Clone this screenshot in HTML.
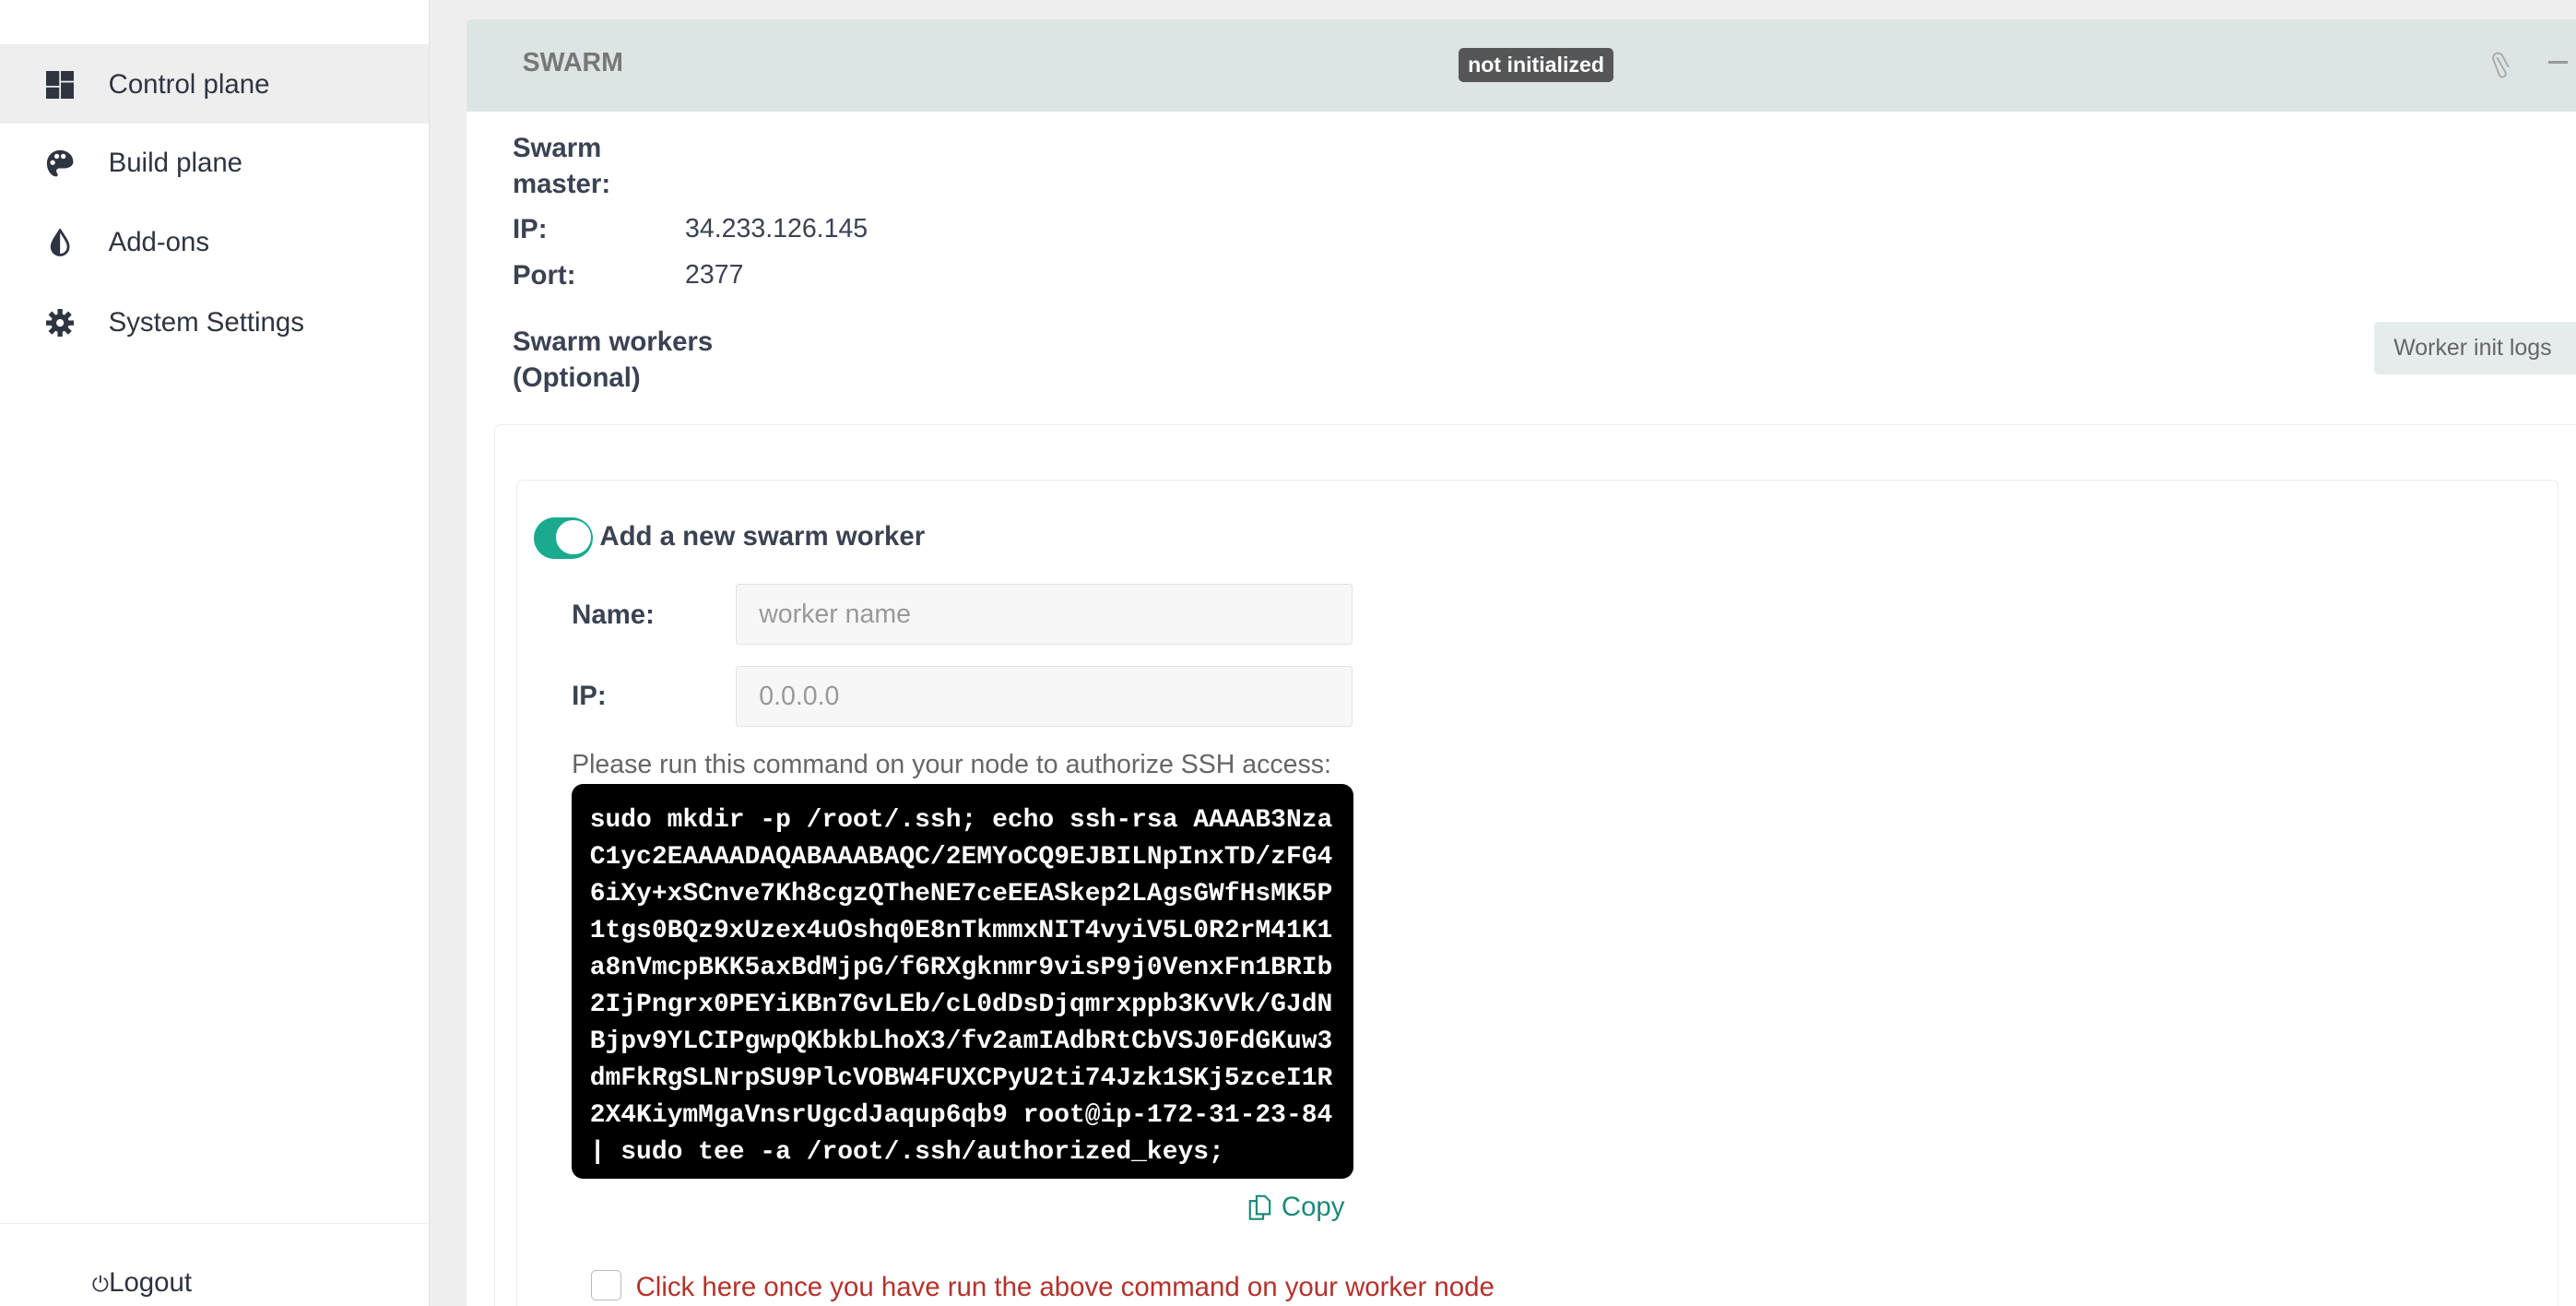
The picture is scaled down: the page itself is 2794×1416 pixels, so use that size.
<!DOCTYPE html>
<html><head><meta charset="utf-8"><style>
html,body{margin:0;padding:0;overflow:hidden}
body{width:2794px;height:1416px;background:#eeeeee;font-family:"Liberation Sans",sans-serif}
#w{zoom:1.78189;width:1568px;height:795px;position:relative;overflow:hidden}
.a{position:absolute;white-space:nowrap}
#side{position:absolute;left:0;top:0;width:261px;height:795px;background:#fff;border-right:1px solid #e2e2e2}
.it{position:absolute;left:0;width:261px;height:48px;font-size:16.5px;color:#2e3440}
.it span{position:absolute;left:66px;top:15px}
.it svg{position:absolute;left:28px;top:16px}
.lb{font-weight:bold;font-size:16.5px;color:#3b4252}
</style></head><body><div id="w">
<div id="side">
 <div class="it" style="top:27px;background:#eeeeee"><svg width="17" height="17" viewBox="0 0 17 17" fill="#2e3440"><rect x="0" y="0" width="8" height="9"/><rect x="0" y="10" width="8" height="7"/><rect x="9" y="0" width="8" height="6"/><rect x="9" y="7" width="8" height="10"/></svg><span>Control plane</span></div>
 <div class="it" style="top:75px"><svg width="17" height="17" viewBox="0 0 17 17"><path d="M8.5 0.5C4 0.5 0.5 4 0.5 8.5 0.5 13 3.5 16.5 6 16.5 7.5 16.5 7.3 15 6.5 14 5.8 13 6.5 11.5 8 11.5L11 11.5C14 11.5 16.5 10 16.5 7.5 16.5 3.5 13 0.5 8.5 0.5Z" fill="#2e3440"/><circle cx="4" cy="8" r="1.5" fill="#fff"/><circle cx="6.5" cy="4.2" r="1.5" fill="#fff"/><circle cx="10.5" cy="4.2" r="1.5" fill="#fff"/></svg><span>Build plane</span></div>
 <div class="it" style="top:123px"><svg width="17" height="17" viewBox="0 0 17 17"><path d="M8.5 1C6 5 3.5 8 3.5 11a5 5 0 0 0 10 0C13.5 8 11 5 8.5 1Z" fill="none" stroke="#2e3440" stroke-width="1.6"/><path d="M8.5 1C6 5 3.5 8 3.5 11a5 5 0 0 0 5 5Z" fill="#2e3440"/></svg><span>Add-ons</span></div>
 <div class="it" style="top:172px"><svg width="17" height="17" viewBox="0 0 17 17"><g fill="#2e3440"><circle cx="8.5" cy="8.5" r="5.5"/><rect x="7" y="0" width="3" height="17"/><rect x="0" y="7" width="17" height="3"/><rect x="7" y="0" width="3" height="17" transform="rotate(45 8.5 8.5)"/><rect x="7" y="0" width="3" height="17" transform="rotate(-45 8.5 8.5)"/></g><circle cx="8.5" cy="8.5" r="2.3" fill="#fff"/></svg><span>System Settings</span></div>
 <div class="a" style="left:0;top:744px;width:261px;border-top:1px solid #eee"></div>
 <div class="a" style="left:56px;top:771px;font-size:16.5px;color:#2e3440"><span style="font-size:13px">⏻</span>Logout</div>
</div>
<div class="a" style="left:284px;top:12px;width:1290px;height:800px;background:#fff;border-radius:3px"></div>
<div class="a" style="left:284px;top:12px;width:1290px;height:56px;background:#dce5e3;border-radius:3px 3px 0 0"></div>
<div class="a" style="left:318px;top:29px;font-weight:bold;font-size:16px;color:#777">SWARM</div>
<div class="a" style="left:888px;top:29px;width:94px;height:21px;background:#555657;border-radius:3px;color:#fff;font-weight:bold;font-size:13px;text-align:center;line-height:21px">not initialized</div>
<svg class="a" style="left:1517px;top:31px" width="12" height="17" viewBox="0 0 12 17"><path d="M3 4L8 13a2 2 0 0 1-3.5 2L1 6a3 3 0 0 1 5.2-3L10 10" fill="none" stroke="#aaa" stroke-width="1.1"/></svg>
<div class="a" style="left:1551px;top:37px;width:12px;height:2px;background:#999"></div>
<div class="a lb" style="left:312px;top:79px;line-height:22px">Swarm<br>master:</div>
<div class="a lb" style="left:312px;top:130px">IP:</div>
<div class="a" style="left:417px;top:130px;font-size:16px;color:#3b4252">34.233.126.145</div>
<div class="a lb" style="left:312px;top:158px">Port:</div>
<div class="a" style="left:417px;top:158px;font-size:16px;color:#3b4252">2377</div>
<div class="a lb" style="left:312px;top:197px;line-height:22px">Swarm workers<br>(Optional)</div>
<div class="a" style="left:1445px;top:196px;width:130px;height:32px;background:#e6ecee;border-radius:3px;font-size:14px;color:#666;line-height:32px;padding-left:12px">Worker init logs</div>
<div class="a" style="left:301px;top:258px;width:1280px;height:560px;border:1px solid #ececec;border-radius:4px"></div>
<div class="a" style="left:314px;top:292px;width:1242px;height:520px;border:1px solid #ececec;border-radius:4px"></div>
<div class="a" style="left:325px;top:315px;width:36px;height:25px;background:#1aab8f;border-radius:13px"></div>
<div class="a" style="left:338px;top:316px;width:21px;height:21px;background:#fff;border-radius:50%;border:1px solid #1aab8f"></div>
<div class="a lb" style="left:365px;top:317px">Add a new swarm worker</div>
<div class="a lb" style="left:348px;top:365px">Name:</div>
<div class="a" style="left:448px;top:355px;width:374px;height:36px;background:#f7f7f7;border:1px solid #e2e2e2;border-radius:2px"></div>
<div class="a" style="left:462px;top:365px;font-size:16px;color:#999">worker name</div>
<div class="a lb" style="left:348px;top:414px">IP:</div>
<div class="a" style="left:448px;top:405px;width:374px;height:36px;background:#f7f7f7;border:1px solid #e2e2e2;border-radius:2px"></div>
<div class="a" style="left:462px;top:415px;font-size:16px;color:#999">0.0.0.0</div>
<div class="a" style="left:348px;top:456px;font-size:16px;color:#666">Please run this command on your node to authorize SSH access:</div>
<div class="a" style="left:348px;top:477px;width:476px;height:240px;background:#000;border-radius:7px"></div>
<pre class="a" style="left:359px;top:488px;margin:0;white-space:pre;font-family:'Liberation Mono',monospace;font-weight:bold;font-size:15.7px;line-height:22.45px;color:#fff">sudo mkdir -p /root/.ssh; echo ssh-rsa AAAAB3Nza
C1yc2EAAAADAQABAAABAQC/2EMYoCQ9EJBILNpInxTD/zFG4
6iXy+xSCnve7Kh8cgzQTheNE7ceEEASkep2LAgsGWfHsMK5P
1tgs0BQz9xUzex4uOshq0E8nTkmmxNIT4vyiV5L0R2rM41K1
a8nVmcpBKK5axBdMjpG/f6RXgknmr9visP9j0VenxFn1BRIb
2IjPngrx0PEYiKBn7GvLEb/cL0dDsDjqmrxppb3KvVk/GJdN
Bjpv9YLCIPgwpQKbkbLhoX3/fv2amIAdbRtCbVSJ0FdGKuw3
dmFkRgSLNrpSU9PlcVOBW4FUXCPyU2ti74Jzk1SKj5zceI1R
2X4KiymMgaVnsrUgcdJaqup6qb9 root@ip-172-31-23-84
| sudo tee -a /root/.ssh/authorized_keys;</pre>
<svg class="a" style="left:760px;top:727px" width="16" height="16" viewBox="0 0 16 16"><g fill="none" stroke="#1a8a7a" stroke-width="1.2"><path d="M5 1h5l3 3v8H5z"/><path d="M5 4H1v11h8v-3"/></g></svg>
<div class="a" style="left:780px;top:725px;font-size:16.5px;color:#1a8a7a">Copy</div>
<div class="a" style="left:360px;top:773px;width:17px;height:17px;border:1px solid #bbb;border-radius:3px;background:#fff"></div>
<div class="a" style="left:387px;top:774px;font-size:16.5px;color:#b5312a">Click here once you have run the above command on your worker node</div>
</div></body></html>
